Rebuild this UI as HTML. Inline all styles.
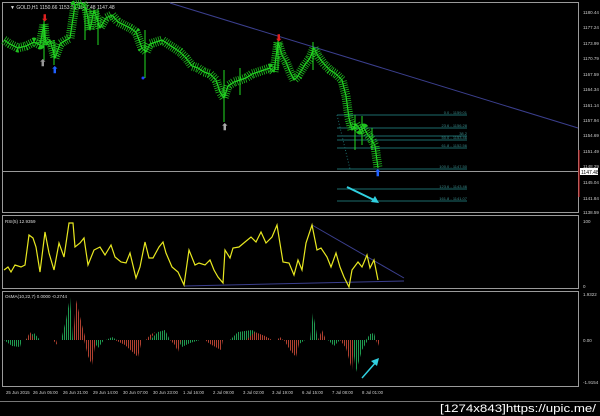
<!DOCTYPE html>
<html><head><meta charset="utf-8"><style>
html,body{margin:0;padding:0;background:#000;width:600px;height:416px;overflow:hidden}
svg{display:block}
text{font-family:"Liberation Sans",sans-serif}
</style></head><body>
<svg width="600" height="416" viewBox="0 0 600 416" xmlns="http://www.w3.org/2000/svg">
<defs>
<pattern id="pg" width="2" height="4" patternUnits="userSpaceOnUse"><rect width="1" height="4" fill="#1f9a50"/></pattern>
<pattern id="pr" width="2" height="4" patternUnits="userSpaceOnUse"><rect width="1" height="4" fill="#b04030"/></pattern>
<polyline id="pl" points="4,40 10,44 18,48 26,46 34,42 40,45 44,24 46,45 50,40 55,58 60,44 66,40 70,38 75,5 82,3 86,8 90,30 94,10 100,28 106,18 112,15 118,22 124,25 130,28 136,32 142,48 146,52 150,44 156,42 162,40 168,44 174,48 180,52 186,58 192,66 198,68 204,72 210,74 216,80 220,92 224,98 228,86 234,82 240,80 246,78 252,74 258,72 264,70 270,68 274,72 278,42 282,55 286,62 290,72 294,80 298,76 304,66 310,58 314,48 318,56 324,64 330,70 336,74 342,80 346,96 349,118 352,130 356,124 360,130 364,128 368,135 372,140 375,146 378,168"/>
</defs>
<rect width="600" height="416" fill="#000"/>
<g stroke="#9a9a9a" stroke-width="1" fill="none">
<rect x="2.5" y="2.5" width="576" height="210"/>
<rect x="2.5" y="215.5" width="576" height="73"/>
<rect x="2.5" y="291.5" width="576" height="95"/>
</g>
<line x1="0" y1="401.5" x2="600" y2="401.5" stroke="#777"/>
<text x="10" y="9" fill="#ddd" font-size="5">▼ GOLD,H1  1150.66 1153.31 1147.48 1147.48</text>
<line x1="170" y1="3" x2="578" y2="128" stroke="#3b3f8e" stroke-width="1"/>
<g stroke="#1d6b6b" stroke-width="1">
<line x1="337" y1="115" x2="467" y2="115"/><line x1="337" y1="128" x2="467" y2="128"/>
<line x1="337" y1="136" x2="467" y2="136"/><line x1="337" y1="140" x2="467" y2="140"/>
<line x1="337" y1="148" x2="467" y2="148"/><line x1="337" y1="169" x2="467" y2="169"/>
<line x1="337" y1="189" x2="467" y2="189"/><line x1="337" y1="201" x2="467" y2="201"/>
</g>
<g fill="#3a8a8a" font-size="4" text-anchor="end">
<text x="467" y="114">0.0 - 1159.01</text><text x="467" y="127">23.6 - 1156.28</text>
<text x="467" y="135">38.2</text><text x="467" y="139">50.0 - 1153.46</text>
<text x="467" y="147">61.8 - 1152.56</text><text x="467" y="168">100.0 - 1147.50</text>
<text x="467" y="188">123.6 - 1143.46</text><text x="467" y="200">161.8 - 1141.07</text>
</g>
<line x1="3" y1="171.5" x2="578" y2="171.5" stroke="#999"/>
<line x1="337" y1="115" x2="350" y2="169" stroke="#1d6b6b" stroke-dasharray="1 2"/>
<g fill="none" stroke="#22dd22" stroke-linejoin="round">
<use href="#pl" stroke-width="1.2"/>
<use href="#pl" stroke-width="9" stroke-dasharray="0.8 1.4" stroke="#1fc01f"/>
</g>
<g stroke="#22dd22" stroke-width="1">
<line x1="44" y1="18" x2="44" y2="60"/><line x1="54" y1="40" x2="54" y2="65"/><line x1="85" y1="3" x2="85" y2="40"/><line x1="98" y1="10" x2="98" y2="45"/><line x1="145" y1="30" x2="145" y2="78"/><line x1="224" y1="70" x2="224" y2="122"/><line x1="240" y1="68" x2="240" y2="95"/><line x1="278" y1="38" x2="278" y2="70"/><line x1="313" y1="42" x2="313" y2="70"/><line x1="355" y1="115" x2="355" y2="150"/><line x1="362" y1="116" x2="362" y2="145"/><line x1="372" y1="128" x2="372" y2="150"/>
</g>
<g font-size="9" font-weight="bold">
<text x="41" y="21" fill="#e02020">⬇</text><text x="275" y="41" fill="#e02020">⬇</text>
<text x="51" y="73" fill="#2060ff">⬆</text><text x="39" y="66" fill="#999">⬆</text>
<text x="221" y="130" fill="#aaa">⬆</text><text x="374" y="176" fill="#2060ff">⬆</text>
</g>
<circle cx="143" cy="78" r="1.5" fill="#2040ff"/>
<line x1="347" y1="187" x2="376" y2="201" stroke="#30d0e0" stroke-width="2"/>
<polygon points="379,203 371,202 375,196" fill="#30d0e0"/>
<g fill="#ccc" font-size="4.5">
<text x="583" y="14">1180.44</text><text x="583" y="29">1177.24</text><text x="583" y="45">1173.99</text>
<text x="583" y="60">1170.79</text><text x="583" y="76">1167.59</text><text x="583" y="91">1164.34</text>
<text x="583" y="107">1161.14</text><text x="583" y="122">1157.94</text><text x="583" y="137">1154.69</text>
<text x="583" y="153">1151.49</text><text x="583" y="168">1148.29</text><text x="583" y="184">1145.04</text>
<text x="583" y="200">1141.84</text><text x="583" y="214">1138.59</text>
</g>
<line x1="579" y1="150" x2="579" y2="197" stroke="#e02020" stroke-width="1"/>
<rect x="580" y="168" width="18" height="7" fill="#fff"/>
<text x="581" y="174" fill="#000" font-size="5">1147.48</text>
<text x="5" y="223" fill="#ddd" font-size="4.5">RSI(5) 12.9359</text>
<text x="583" y="223" fill="#ccc" font-size="4.5">100</text><text x="583" y="288" fill="#ccc" font-size="4.5">0</text>
<line x1="312" y1="225" x2="404" y2="278" stroke="#3b3f8e"/>
<line x1="184" y1="286" x2="404" y2="281" stroke="#3b3f8e"/>
<polyline fill="none" stroke="#e8e820" stroke-width="1.2" points="4,270 8,267 11,272 15,265 21,267 25,265 29,235 33,238 36,247 40,272 45,232 49,253 54,270 59,243 64,257 69,223 73,223 75,247 80,243 84,238 88,265 94,250 100,247 105,255 111,245 115,257 121,262 126,263 130,253 136,278 140,267 145,242 149,258 153,258 159,247 163,242 166,253 172,267 178,272 184,285 189,250 195,265 199,263 205,265 210,260 214,270 218,277 223,283 225,250 230,258 233,248 239,247 245,242 251,237 256,242 261,232 266,243 272,237 277,225 283,262 289,263 294,275 298,260 302,270 306,243 312,225 317,250 321,248 327,257 331,267 336,253 340,267 344,277 349,287 352,270 358,262 362,267 367,255 370,268 374,260 378,280"/>
<text x="5" y="298" fill="#ddd" font-size="4.5">OsMA(10,22,7) 0.0000 -0.2744</text>
<g fill="#ccc" font-size="4.5">
<text x="583" y="296">1.9322</text><text x="583" y="342">0.00</text><text x="583" y="384">-1.9154</text>
</g>
<g fill="url(#pg)">
<polygon points="4,340 22,340 20,347 12,346"/>
<polygon points="25,340 34,333 40,340"/>
<polygon points="61,340 66,320 70,297 73,340"/>
<polygon points="93,340 98,348 104,340"/>
<polygon points="106,340 112,337 117,340"/>
<polygon points="150,340 158,332 165,330 170,340"/>
<polygon points="178,340 182,347 190,343 200,340"/>
<polygon points="230,340 238,332 252,330 268,340"/>
<polygon points="287,340 295,347 305,340"/>
<polygon points="310,340 313,313 318,340"/>
<polygon points="328,340 334,346 340,340"/>
<polygon points="352,340 356,372 362,350 368,340"/>
<polygon points="366,340 370,334 374,333 376,340"/>
</g>
<g fill="url(#pr)">
<polygon points="26,340 30,332 35,340"/>
<polygon points="53,340 58,346 60,352 56,340"/>
<polygon points="73,340 76,300 82,325 86,340"/>
<polygon points="84,340 88,356 92,365 96,340"/>
<polygon points="115,340 125,345 138,357 142,340"/>
<polygon points="146,340 150,335 155,332 150,340"/>
<polygon points="170,340 175,345 178,352 181,340"/>
<polygon points="205,340 210,344 221,350 223,340"/>
<polygon points="246,340 255,332 265,336 272,340"/>
<polygon points="277,340 280,337 283,340"/>
<polygon points="284,340 290,350 296,357 300,340"/>
<polygon points="318,340 322,330 326,340"/>
<polygon points="340,340 346,348 352,370 354,340"/>
<polygon points="376,340 378,346 380,340"/>
</g>
<line x1="362" y1="378" x2="376" y2="362" stroke="#30d0e0" stroke-width="1.5"/>
<polygon points="379,358 371,361 377,366" fill="#30d0e0"/>
<g fill="#ccc" font-size="4.3">
<text x="6" y="394">25 Jun 2015</text><text x="33" y="394">26 Jun 05:00</text><text x="63" y="394">26 Jun 21:00</text>
<text x="93" y="394">29 Jun 14:00</text><text x="123" y="394">30 Jun 07:00</text><text x="153" y="394">30 Jun 23:00</text>
<text x="183" y="394">1 Jul 16:00</text><text x="213" y="394">2 Jul 09:00</text><text x="243" y="394">3 Jul 02:00</text>
<text x="272" y="394">3 Jul 19:00</text><text x="302" y="394">6 Jul 15:00</text><text x="332" y="394">7 Jul 08:00</text>
<text x="362" y="394">8 Jul 01:00</text>
</g>
<text x="440" y="412" fill="#fff" font-size="11" font-family="DejaVu Sans Condensed, DejaVu Sans, sans-serif" textLength="156" lengthAdjust="spacingAndGlyphs">[1274x843]https://upic.me/</text>
</svg>
</body></html>
